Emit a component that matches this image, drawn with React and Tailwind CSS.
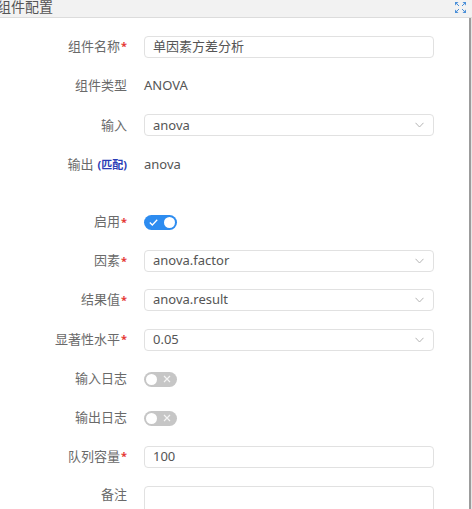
import React from "react";

const FONT = { fontFamily: '"Noto Sans", "Noto Sans CJK SC", sans-serif' };

const Chevron = () => (
  <svg width="9" height="6" viewBox="0 0 9 6" className="absolute right-[9px] top-1/2 -translate-y-1/2">
    <polyline points="0.5,0.8 4.5,5 8.5,0.8" fill="none" stroke="#b4b4b4" strokeWidth="1" />
  </svg>
);

const ExpandIcon = () => (
  <svg width="11" height="11" viewBox="0 0 11 11">
    <g fill="#4a8fd8" stroke="#4a8fd8" strokeWidth="1">
      <line x1="1.5" y1="1.5" x2="4" y2="4" />
      <line x1="9.5" y1="1.5" x2="7" y2="4" />
      <line x1="1.5" y1="9.5" x2="4" y2="7" />
      <line x1="9.5" y1="9.5" x2="7" y2="7" />
      <polygon points="0,0 3.5,0 0,3.5" stroke="none" />
      <polygon points="11,0 7.5,0 11,3.5" stroke="none" />
      <polygon points="0,11 3.5,11 0,7.5" stroke="none" />
      <polygon points="11,11 7.5,11 11,7.5" stroke="none" />
    </g>
  </svg>
);

const Toggle = ({ on }) =>
  on ? (
    <div className="relative w-[33px] h-[15px] rounded-full bg-[#2d8cf0]">
      <svg width="9" height="7" viewBox="0 0 9 7" className="absolute left-[5px] top-[4px]">
        <polyline points="0.8,3.5 3.3,6 8.2,0.8" fill="none" stroke="#fff" strokeWidth="1.3" />
      </svg>
      <div className="absolute right-[2px] top-[2px] w-[11px] h-[11px] rounded-full bg-white" />
    </div>
  ) : (
    <div className="relative w-[33px] h-[15px] rounded-full bg-[#c6c6c6]">
      <div className="absolute left-[2px] top-[2px] w-[11px] h-[11px] rounded-full bg-white" />
      <svg width="8" height="8" viewBox="0 0 8 8" className="absolute right-[6px] top-[3.5px]">
        <path d="M1 1 L7 7 M7 1 L1 7" stroke="#f4f4f4" strokeWidth="1.2" />
      </svg>
    </div>
  );

const Input = ({ value, select }) => (
  <div className="relative w-[290px] h-[22px] rounded-[4px] border border-[#e1e1e1] bg-white flex items-center pl-[8px] text-[13px] text-[#555]">
    {value}
    {select && <Chevron />}
  </div>
);

const Row = ({ label, required, extra, children, className = "h-[39px]" }) => (
  <div className={`flex items-center shrink-0 ${className}`}>
    <div className="w-[128px] pr-[1px] flex justify-end items-center text-[13px] text-[#6a6a6a]">
      <span>{label}</span>
      {extra}
      {required && <span className="text-[#e53935] text-[11px] font-bold leading-none -mt-[2px] ml-[1px]">*</span>}
    </div>
    <div className="ml-[16px] flex items-center">{children}</div>
  </div>
);

export default function App() {
  return (
    <div className="w-[472px] h-[509px] overflow-hidden bg-white flex flex-col" style={FONT}>
      <div className="h-[18px] shrink-0 bg-[#f2f2f2] border-b border-[#dcdcdc] flex items-start justify-between">
        <span className="ml-[-3px] -mt-[3px] text-[14px] text-[#555] leading-[20px]">组件配置</span>
        <div className="mr-[6px] mt-[2px]">
          <ExpandIcon />
        </div>
      </div>
      <div className="flex flex-1 min-h-0">
        <div className="flex-1 pt-[9px] flex flex-col">
          <Row label="组件名称" required className="h-[39.4px]">
            <Input value="单因素方差分析" />
          </Row>
          <Row label="组件类型" className="h-[39.4px]">
            <span className="text-[13px] text-[#555]">ANOVA</span>
          </Row>
          <Row label="输入" className="h-[39.4px]">
            <Input value="anova" select />
          </Row>
          <Row
            label="输出"
            className="h-[39.4px]"
            extra={<span className="ml-[4px] text-[11px] font-bold text-[#2a3bb5]">(匹配)</span>}
          >
            <span className="text-[13px] text-[#555]">anova</span>
          </Row>
          <Row label="启用" required className="h-[39px] mt-[18px]">
            <Toggle on />
          </Row>
          <Row label="因素" required>
            <Input value="anova.factor" select />
          </Row>
          <Row label="结果值" required>
            <Input value="anova.result" select />
          </Row>
          <Row label="显著性水平" required className="h-[40px]">
            <Input value="0.05" select />
          </Row>
          <Row label="输入日志">
            <Toggle />
          </Row>
          <Row label="输出日志">
            <Toggle />
          </Row>
          <Row label="队列容量" required className="h-[38px]">
            <Input value="100" />
          </Row>
          <div className="flex shrink-0 h-[39px]">
            <div className="w-[128px] pr-[1px] flex justify-end items-center text-[13px] text-[#6a6a6a]">备注</div>
            <div className="ml-[16px] mt-[10px] w-[290px] h-[54px] rounded-[4px] border border-[#e1e1e1] bg-white shrink-0" />
          </div>
        </div>
        <div className="w-[2px] bg-[#9c9c9c]" />
        <div className="w-[1px] bg-[#e6e6e6]" />
      </div>
    </div>
  );
}
